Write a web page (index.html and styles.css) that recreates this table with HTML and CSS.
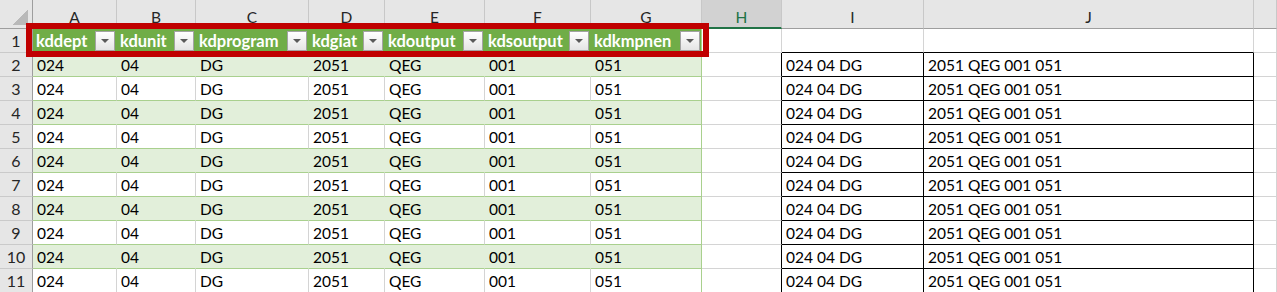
FILE: index.html
```html
<!DOCTYPE html>
<html>
<head>
<meta charset="utf-8">
<link rel="stylesheet" href="styles.css">
</head>
<body>
<div class="sheet">
  <div class="corner"></div>
  <div class="ch">A</div><div class="ch">B</div><div class="ch">C</div><div class="ch">D</div><div class="ch">E</div><div class="ch">F</div><div class="ch">G</div><div class="ch sel">H</div><div class="ch">I</div><div class="ch">J</div><div class="ch"></div>

  <div class="rh">1</div>
  <div class="c th"><span>kddept</span><span class="fb"></span></div>
  <div class="c th"><span>kdunit</span><span class="fb"></span></div>
  <div class="c th"><span>kdprogram</span><span class="fb"></span></div>
  <div class="c th"><span>kdgiat</span><span class="fb"></span></div>
  <div class="c th"><span>kdoutput</span><span class="fb"></span></div>
  <div class="c th"><span>kdsoutput</span><span class="fb"></span></div>
  <div class="c th last"><span>kdkmpnen</span><span class="fb"></span></div>
  <div class="c"></div><div class="c bb"></div><div class="c bb"></div><div class="c"></div>

  <div class="rh">2</div>
  <div class="c g">024</div><div class="c g">04</div><div class="c g">DG</div><div class="c g">2051</div><div class="c g">QEG</div><div class="c g">001</div><div class="c g last">051</div>
  <div class="c br"></div><div class="c box">024 04 DG</div><div class="c box">2051 QEG 001 051</div><div class="c"></div>

  <div class="rh">3</div>
  <div class="c w">024</div><div class="c w">04</div><div class="c w">DG</div><div class="c w">2051</div><div class="c w">QEG</div><div class="c w">001</div><div class="c w last">051</div>
  <div class="c br"></div><div class="c box">024 04 DG</div><div class="c box">2051 QEG 001 051</div><div class="c"></div>

  <div class="rh">4</div>
  <div class="c g">024</div><div class="c g">04</div><div class="c g">DG</div><div class="c g">2051</div><div class="c g">QEG</div><div class="c g">001</div><div class="c g last">051</div>
  <div class="c br"></div><div class="c box">024 04 DG</div><div class="c box">2051 QEG 001 051</div><div class="c"></div>

  <div class="rh">5</div>
  <div class="c w">024</div><div class="c w">04</div><div class="c w">DG</div><div class="c w">2051</div><div class="c w">QEG</div><div class="c w">001</div><div class="c w last">051</div>
  <div class="c br"></div><div class="c box">024 04 DG</div><div class="c box">2051 QEG 001 051</div><div class="c"></div>

  <div class="rh">6</div>
  <div class="c g">024</div><div class="c g">04</div><div class="c g">DG</div><div class="c g">2051</div><div class="c g">QEG</div><div class="c g">001</div><div class="c g last">051</div>
  <div class="c br"></div><div class="c box">024 04 DG</div><div class="c box">2051 QEG 001 051</div><div class="c"></div>

  <div class="rh">7</div>
  <div class="c w">024</div><div class="c w">04</div><div class="c w">DG</div><div class="c w">2051</div><div class="c w">QEG</div><div class="c w">001</div><div class="c w last">051</div>
  <div class="c br"></div><div class="c box">024 04 DG</div><div class="c box">2051 QEG 001 051</div><div class="c"></div>

  <div class="rh">8</div>
  <div class="c g">024</div><div class="c g">04</div><div class="c g">DG</div><div class="c g">2051</div><div class="c g">QEG</div><div class="c g">001</div><div class="c g last">051</div>
  <div class="c br"></div><div class="c box">024 04 DG</div><div class="c box">2051 QEG 001 051</div><div class="c"></div>

  <div class="rh">9</div>
  <div class="c w">024</div><div class="c w">04</div><div class="c w">DG</div><div class="c w">2051</div><div class="c w">QEG</div><div class="c w">001</div><div class="c w last">051</div>
  <div class="c br"></div><div class="c box">024 04 DG</div><div class="c box">2051 QEG 001 051</div><div class="c"></div>

  <div class="rh">10</div>
  <div class="c g">024</div><div class="c g">04</div><div class="c g">DG</div><div class="c g">2051</div><div class="c g">QEG</div><div class="c g">001</div><div class="c g last">051</div>
  <div class="c br"></div><div class="c box">024 04 DG</div><div class="c box">2051 QEG 001 051</div><div class="c"></div>

  <div class="rh">11</div>
  <div class="c w">024</div><div class="c w">04</div><div class="c w">DG</div><div class="c w">2051</div><div class="c w">QEG</div><div class="c w">001</div><div class="c w last">051</div>
  <div class="c br"></div><div class="c box">024 04 DG</div><div class="c box">2051 QEG 001 051</div><div class="c"></div>
</div>
<div class="mark"></div>
</body>
</html>
```

FILE: styles.css
```css
html, body {
  margin: 0;
  padding: 0;
  background: #ffffff;
  overflow: hidden;
}

body {
  position: relative;
  width: 1277px;
  height: 292px;
  font-family: Lato, "Open Sans", "Liberation Sans", sans-serif;
}

.sheet {
  display: grid;
  grid-template-columns: 33px 84px 79px 113px 76px 100px 106px 111px 80px 142px 330px 23px;
  grid-template-rows: 29px repeat(11, 24px);
}

.sheet > div {
  box-sizing: border-box;
}

.corner {
  background-color: #e6e6e6;
  background-image: linear-gradient(to bottom right, transparent 50%, #b9b9b9 50%);
  background-repeat: no-repeat;
  background-size: 15px 15px;
  background-position: right 4px bottom 3px;
  border-right: 1px solid #9e9e9e;
  border-bottom: 1px solid #9e9e9e;
}

.ch {
  background: #e6e6e6;
  border-right: 1px solid #c8c8c8;
  border-bottom: 1px solid #9e9e9e;
  color: #262626;
  font-size: 15.5px;
  line-height: 18px;
  padding-top: 8px;
  text-align: center;
}

.ch.sel {
  background: #d2d2d2;
  color: #217346;
  border-bottom: 2px solid #217346;
}

.rh {
  background: #e6e6e6;
  border-right: 1px solid #9e9e9e;
  border-bottom: 1px solid #cacaca;
  color: #262626;
  font-size: 16px;
  line-height: 20px;
  padding-top: 2px;
  text-align: center;
}

.c {
  border-right: 1px solid #d4d4d4;
  border-bottom: 1px solid #d4d4d4;
  color: #000000;
  font-size: 15.5px;
  line-height: 20px;
  padding: 2px 0 0 4px;
  white-space: nowrap;
  overflow: hidden;
}

.c.g {
  background: #e2efda;
  border-right-color: #e2efda;
  border-bottom-color: #a9d08e;
}

.c.w {
  border-bottom-color: #a9d08e;
}

.c.last {
  border-right-color: #a9d08e;
}

.c.th {
  background: #70ad47;
  border-right-color: #70ad47;
  border-bottom-color: #a9d08e;
  color: #ffffff;
  font-size: 16.5px;
  font-weight: 700;
  display: flex;
  align-items: center;
  justify-content: space-between;
  padding: 0 1px 0 3px;
}

.c.th.last {
  border-right-color: #a9d08e;
}

.fb {
  box-sizing: border-box;
  width: 20px;
  height: 20px;
  flex: none;
  border: 1px solid #a3a3a3;
  background: linear-gradient(#ffffff, #e4e4e4);
  display: flex;
  align-items: center;
  justify-content: center;
}

.fb::after {
  content: "";
  width: 0;
  height: 0;
  border-left: 4px solid transparent;
  border-right: 4px solid transparent;
  border-top: 4px solid #5a5a5a;
}

.c.bb {
  border-bottom-color: #000000;
}

.c.br {
  border-right-color: #000000;
}

.c.box {
  border-right-color: #000000;
  border-bottom-color: #000000;
}

.mark {
  position: absolute;
  left: 26px;
  top: 23px;
  width: 683px;
  height: 34px;
  box-sizing: border-box;
  border: 6px solid #c00000;
}
```
